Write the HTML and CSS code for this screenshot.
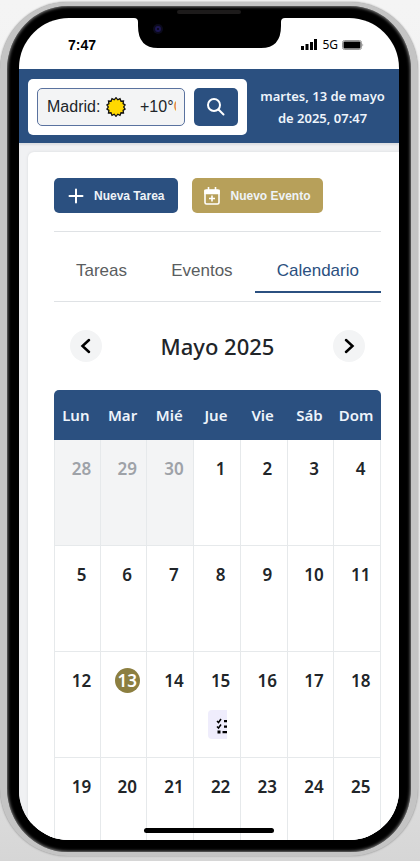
FILE: index.html
```html
<!DOCTYPE html>
<html lang="es">
<head>
<meta charset="utf-8">
<meta name="viewport" content="width=device-width, initial-scale=1">
<title>Calendario</title>
<link rel="stylesheet" href="styles.css">
</head>
<body>
<div class="phone">
  <div class="speaker"></div>
  <div class="screen">
    <div class="notch">
      <svg viewBox="0 0 151 30" width="151" height="30" aria-hidden="true">
        <path d="M0 0H151Q147 0 147 4V8Q147 30 127 30H24Q4 30 4 8V4Q4 0 0 0Z" fill="#000"/>
        <circle cx="24" cy="11" r="5" fill="#0b0a1c"/>
        <circle cx="24" cy="11" r="3" fill="#1c1652"/>
        <circle cx="24" cy="11" r="1" fill="#060512"/>
      </svg>
    </div>
    <div class="status">
      <span class="clock">7:47</span>
      <span class="signal">
        <svg viewBox="0 0 17 12" width="17" height="12" aria-hidden="true"><path d="M0 7h3v4H0zM4.500 5h3v6h-3zM9 3h3v8H9zM13 0h3v11h-3z"/></svg>
        <span class="network">5G</span>
        <svg viewBox="0 0 22 10" width="22" height="10" aria-hidden="true"><rect x=".5" y=".5" width="19" height="9" rx="2" fill="none" stroke="#999"/><rect x="1.500" y="1.500" width="17" height="7" rx="1"/><path d="M20.500 3.500q1.500 1.500 0 3z" fill="#777"/></svg>
      </span>
    </div>
    <header class="topbar">
      <form class="search">
        <label class="field">
          <input class="city" type="text" value="Madrid:" aria-label="Ciudad">
          <svg class="sun" viewBox="-10 -10 20 20" width="20" height="20" aria-hidden="true"><path d="M0-9.300L1.800-7.200 4-8.400 5-5.800 7.500-6 7.100-3.400 9.100-2.100 7.700 0 9.100 2.100 7.100 3.400 7.500 6 5 5.800 4 8.400 1.800 7.200 0 9.300-1.800 7.200-4 8.400-5 5.800-7.500 6-7.100 3.400-9.100 2.100-7.700 0-9.100-2.100-7.100-3.400-7.500-6-5-5.800-4-8.400-1.800-7.200Z" fill="#ffd800" stroke="#111" stroke-width="1.300"/></svg>
          <output class="temp">+10°<span class="unit">C</span></output>
        </label>
        <button class="go" type="submit" aria-label="Buscar">
          <svg viewBox="0 0 20 20" width="20" height="20" fill="none" stroke="#fff" stroke-width="2" stroke-linecap="round" aria-hidden="true"><circle cx="8" cy="8" r="6"/><path d="M12.500 12.500l5 5"/></svg>
        </button>
      </form>
      <p class="date">martes, 13 de mayo de 2025, 07:47</p>
    </header>
    <main class="page">
      <section class="card">
        <div class="actions">
          <button class="btn" type="button">
            <svg viewBox="0 0 16 16" width="16" height="16" stroke="#fff" stroke-width="2" stroke-linecap="round" aria-hidden="true"><path d="M8 1.500v13M1.500 8h13"/></svg>
            Nueva Tarea
          </button>
          <button class="btn gold" type="button">
            <svg viewBox="0 0 16 18" width="16" height="18" fill="none" stroke="#fff" stroke-width="1.600" aria-hidden="true"><rect x="1" y="3" width="14" height="14" rx="1.500"/><path d="M1 3.500h14v3H1z" fill="#fff"/><path d="M4.500 0v4M11.500 0v4M8 8.500v6M5 11.500h6"/></svg>
            Nuevo Evento
          </button>
        </div>
        <nav class="tabs">
          <a class="tab" href="#tareas">Tareas</a>
          <a class="tab" href="#eventos">Eventos</a>
          <a class="tab active" href="#calendario">Calendario</a>
        </nav>
        <div class="month">
          <button class="arrow" type="button" aria-label="Mes anterior"><svg viewBox="0 0 16 18" width="16" height="18" aria-hidden="true"><path d="M11 3L4.500 9l6.500 6"/></svg></button>
          <h1>Mayo 2025</h1>
          <button class="arrow" type="button" aria-label="Mes siguiente"><svg viewBox="0 0 16 18" width="16" height="18" aria-hidden="true"><path d="M5 3l6.500 6L5 15"/></svg></button>
        </div>
        <table class="calendar">
          <thead><tr><th>Lun</th><th>Mar</th><th>Mié</th><th>Jue</th><th>Vie</th><th>Sáb</th><th>Dom</th></tr></thead>
          <tbody>
            <tr><td class="other"><span class="day">28</span></td><td class="other"><span class="day">29</span></td><td class="other"><span class="day">30</span></td><td><span class="day">1</span></td><td><span class="day">2</span></td><td><span class="day">3</span></td><td><span class="day">4</span></td></tr>
            <tr><td><span class="day">5</span></td><td><span class="day">6</span></td><td><span class="day">7</span></td><td><span class="day">8</span></td><td><span class="day">9</span></td><td><span class="day">10</span></td><td><span class="day">11</span></td></tr>
            <tr><td><span class="day">12</span></td><td><span class="day today">13</span></td><td><span class="day">14</span></td><td><span class="day">15</span>
              <div class="task"><svg viewBox="0 0 16 16" width="16" height="16" aria-hidden="true"><path d="M1 3l1.500 1.500L5 1M1 8.500L2.500 10 5 6.500" fill="none" stroke="#000" stroke-width="1.500"/><path d="M1.500 12.500h3v3h-3zM8 2h8v2.200H8zM8 7.500h8v2.200H8zM6.500 13h9.500v2.200H6.500z"/></svg></div>
            </td><td><span class="day">16</span></td><td><span class="day">17</span></td><td><span class="day">18</span></td></tr>
            <tr><td><span class="day">19</span></td><td><span class="day">20</span></td><td><span class="day">21</span></td><td><span class="day">22</span></td><td><span class="day">23</span></td><td><span class="day">24</span></td><td><span class="day">25</span></td></tr>
          </tbody>
        </table>
      </section>
    </main>
    <div class="home"></div>
  </div>
</div>
</body>
</html>
```
FILE: styles.css
```css
* { box-sizing: border-box; }

body {
  margin: 0;
  height: 100vh;
  display: flex;
  padding: 2px 2px 5px 0;
  background: linear-gradient(#f4f4f4, #eee 70%, #d6d6d6);
  font-family: "Noto Sans", "Open Sans", sans-serif;
  color: #212529;
}

button, input { font: inherit; border: 0; margin: 0; padding: 0; }
button { display: flex; align-items: center; justify-content: center; cursor: pointer; }

.phone {
  position: relative;
  flex: 1;
  min-width: 0;
  display: flex;
  padding: 12px;
  background: #000;
  border: solid #c4c4c4;
  border-width: 4px 7px 4px 7px;
  border-radius: 68px;
  box-shadow: inset 0 0 3px 1px #777, 0 0 2px #888;
}

.speaker {
  position: absolute;
  top: 4px;
  left: 50%;
  width: 64px;
  height: 4px;
  margin-left: -32px;
  border-radius: 2px;
  background: #1d1b1b;
}

.screen {
  position: relative;
  flex: 1;
  min-width: 0;
  display: flex;
  flex-direction: column;
  overflow: hidden;
  border-radius: 50px;
  background: #fff;
}

.notch {
  position: absolute;
  top: 0;
  left: 0;
  right: 0;
  display: flex;
  justify-content: center;
}

.status {
  flex: none;
  display: flex;
  justify-content: space-between;
  height: 51px;
  padding: 2px 35px 0 49px;
  align-items: center;
  color: #000;
}

.clock { font: bold 14px "Liberation Sans", sans-serif; }
.signal { display: flex; align-items: center; gap: 4px; }
.network { font-size: 12px; line-height: 12px; }

.topbar {
  flex: none;
  display: flex;
  align-items: center;
  gap: 8px;
  padding: 10px 9px 8px;
  background: #2b5080;
}

.search {
  flex: none;
  display: flex;
  gap: 9px;
  padding: 9px;
  background: #fff;
  border-radius: 5px;
}

.field {
  display: flex;
  align-items: center;
  width: 148px;
  height: 38px;
  padding: 0 8px 0 9px;
  border: 1px solid #5a729f;
  border-radius: 5px;
  background: #f3f4f5;
  font: 16px "Liberation Sans", sans-serif;
  overflow: hidden;
}

.city { flex: none; width: 59px; background: none; color: #212529; outline: 0; }
.sun { flex: none; }
.temp { flex: 1; min-width: 0; margin-left: 14px; overflow: hidden; white-space: nowrap; }
.unit { color: #e08a4a; }

.go { width: 44px; height: 38px; border-radius: 5px; background: #2b5080; }

.date {
  flex: 1;
  margin: 0;
  font-size: 13px;
  line-height: 22px;
  font-weight: 600;
  text-align: center;
  color: #eef4fb;
}

.page {
  flex: 1;
  min-height: 0;
  padding: 9px 0 0 9px;
  background: #f0f1f3;
  box-shadow: inset 0 2px 2px #dcdee1;
}

.card {
  padding: 26px 18px 0 26px;
  background: #fff;
  border-radius: 6px 0 0 0;
  box-shadow: 0 0 3px #d8dadd;
}

.actions {
  display: flex;
  gap: 14px;
  padding-bottom: 18px;
  border-bottom: 1px solid #dfe2e5;
}

.btn {
  gap: 10px;
  height: 35px;
  padding: 0 14px;
  border-radius: 5px;
  background: #2b5080;
  color: #eef3f8;
  font: bold 12px "Liberation Sans", sans-serif;
}
.btn.gold { padding: 0 12px; background: #b7a05a; }

.tabs {
  display: flex;
  justify-content: space-between;
  padding: 19px 0 8px;
  border-bottom: 1px solid #dfe2e5;
  font: 17px "Liberation Sans", sans-serif;
}

.tab {
  padding: 0 22px;
  line-height: 40px;
  border-bottom: 2px solid transparent;
  color: #5a5d60;
  text-decoration: none;
}
.tab.active { color: #2b5080; border-color: #2b5080; }

.month {
  display: flex;
  align-items: center;
  justify-content: space-between;
  padding: 28px 16px;
}
.month h1 { margin: 0; font-size: 22px; line-height: 32px; font-weight: 500; }

.arrow { width: 32px; height: 32px; border-radius: 50%; background: #f3f4f5; }
.arrow path { fill: none; stroke: #000; stroke-width: 2.5; stroke-linecap: round; }

.calendar {
  width: 100%;
  table-layout: fixed;
  border-collapse: separate;
  border-spacing: 0;
}

th {
  height: 50px;
  padding: 0 3px 0 0;
  background: #2b5080;
  color: #eef4fb;
  font-size: 15px;
  font-weight: 600;
}
th:first-child { border-radius: 5px 0 0 0; }
th:last-child { border-radius: 0 5px 0 0; }

td {
  height: 106px;
  padding: 16px 8px 0 14px;
  border: solid #e6e9eb;
  border-width: 0 1px 1px 0;
  vertical-align: top;
}
td:first-child { border-left-width: 1px; }
.other { background: #f3f4f5; color: #9ea2a8; }

.day {
  display: block;
  width: 25px;
  margin-left: auto;
  border-radius: 50%;
  font-size: 17px;
  line-height: 25px;
  font-weight: 600;
  text-align: center;
}
.today { background: #8c7f40; color: #fff; }

.task {
  width: 19px;
  height: 29px;
  margin-top: 17px;
  padding: 7px 0 0 8px;
  border-radius: 4px 0 0 4px;
  background: #efedfc;
  overflow: hidden;
}

.home {
  position: absolute;
  bottom: 7px;
  left: 50%;
  width: 130px;
  height: 5px;
  margin-left: -65px;
  border-radius: 3px;
  background: #000;
}
```
